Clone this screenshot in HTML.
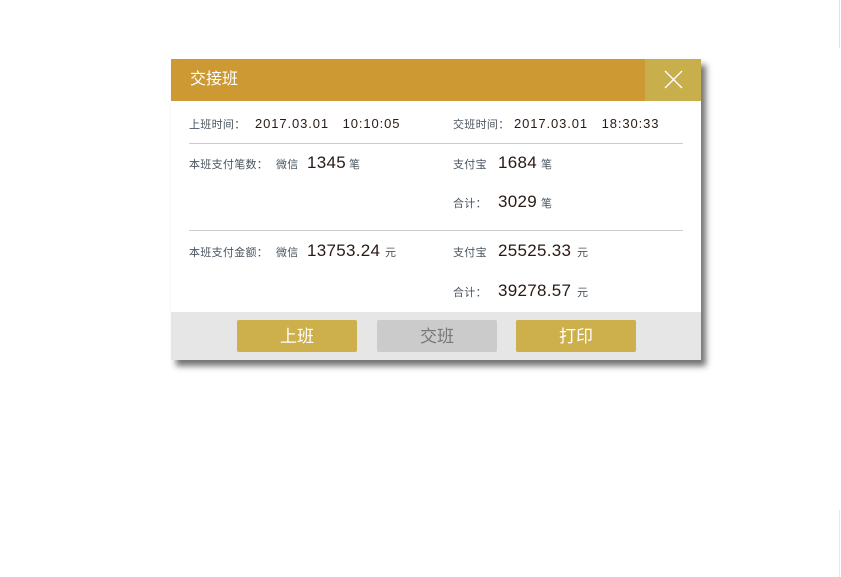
<!DOCTYPE html>
<html><head><meta charset="utf-8"><style>
*{margin:0;padding:0;box-sizing:border-box}
body{width:841px;height:577px;background:#fff;position:relative;overflow:hidden;font-family:"Liberation Sans","Noto Sans CJK SC",sans-serif}
.dlg{position:absolute;left:171px;top:59px;width:530px;height:301px;background:#fff;box-shadow:5px 6px 6px rgba(0,0,0,.55)}
.hd{position:absolute;left:0;top:0;width:530px;height:42px;background:#cc9933;color:#fff;font-size:16px;line-height:42px;padding-left:19px}
.cl{position:absolute;right:0;top:0;width:56px;height:42px;background:#c9ae4c}
.t{position:absolute;white-space:nowrap;color:#4a5560;font-size:11px;letter-spacing:0.3px}
.v{position:absolute;white-space:nowrap;color:#2a1a14;font-size:13px;letter-spacing:0.9px}
.b{position:absolute;white-space:nowrap;color:#2a1a14;font-size:17px;letter-spacing:0.3px}
.ln{position:absolute;left:18px;width:494px;height:1px;background:#ccc}
.ft{position:absolute;left:0;top:253px;width:530px;height:48px;background:#e6e6e6}
.btn{position:absolute;top:8px;width:120px;height:32px;border-radius:2px;color:#fff;font-size:17px;text-align:center;line-height:34px}
</style></head><body>
<div style="position:absolute;left:839px;top:0;width:1px;height:48px;background:#efe3b8"></div>
<div style="position:absolute;left:839px;top:510px;width:1px;height:67px;background:#e8e8e8"></div>
<div class="dlg">
<div class="hd">交接班</div>
<div class="cl"><svg width="56" height="42"><path d="M20 12L37 29M37 12L20 29" stroke="#fff" stroke-width="1.3"/></svg></div>
<div class="t" style="left:18px;top:57px">上班时间：</div>
<div class="v" style="left:84px;top:57px">2017.03.01&nbsp;&nbsp;&nbsp;10:10:05</div>
<div class="t" style="left:282px;top:57px">交班时间：</div>
<div class="v" style="left:343px;top:57px">2017.03.01&nbsp;&nbsp;&nbsp;18:30:33</div>
<div class="ln" style="top:84px"></div>
<div class="t" style="left:18px;top:97px">本班支付笔数：</div>
<div class="t" style="left:105px;top:97px">微信</div>
<div class="b" style="left:136px;top:94px">1345</div>
<div class="t" style="left:178px;top:97px">笔</div>
<div class="t" style="left:282px;top:97px">支付宝</div>
<div class="b" style="left:327px;top:94px">1684</div>
<div class="t" style="left:370px;top:97px">笔</div>
<div class="t" style="left:282px;top:136px">合计：</div>
<div class="b" style="left:327px;top:133px">3029</div>
<div class="t" style="left:370px;top:136px">笔</div>
<div class="ln" style="top:171px"></div>
<div class="t" style="left:18px;top:185px">本班支付金额：</div>
<div class="t" style="left:105px;top:185px">微信</div>
<div class="b" style="left:136px;top:182px">13753.24</div>
<div class="t" style="left:214px;top:185px">元</div>
<div class="t" style="left:282px;top:185px">支付宝</div>
<div class="b" style="left:327px;top:182px">25525.33</div>
<div class="t" style="left:406px;top:185px">元</div>
<div class="t" style="left:282px;top:225px">合计：</div>
<div class="b" style="left:327px;top:222px">39278.57</div>
<div class="t" style="left:406px;top:225px">元</div>
<div class="ft">
<div class="btn" style="left:66px;background:#cdb04c">上班</div>
<div class="btn" style="left:206px;background:#cbcbcb;color:#777">交班</div>
<div class="btn" style="left:345px;background:#cdb04c">打印</div>
</div>
</div>
</body></html>
